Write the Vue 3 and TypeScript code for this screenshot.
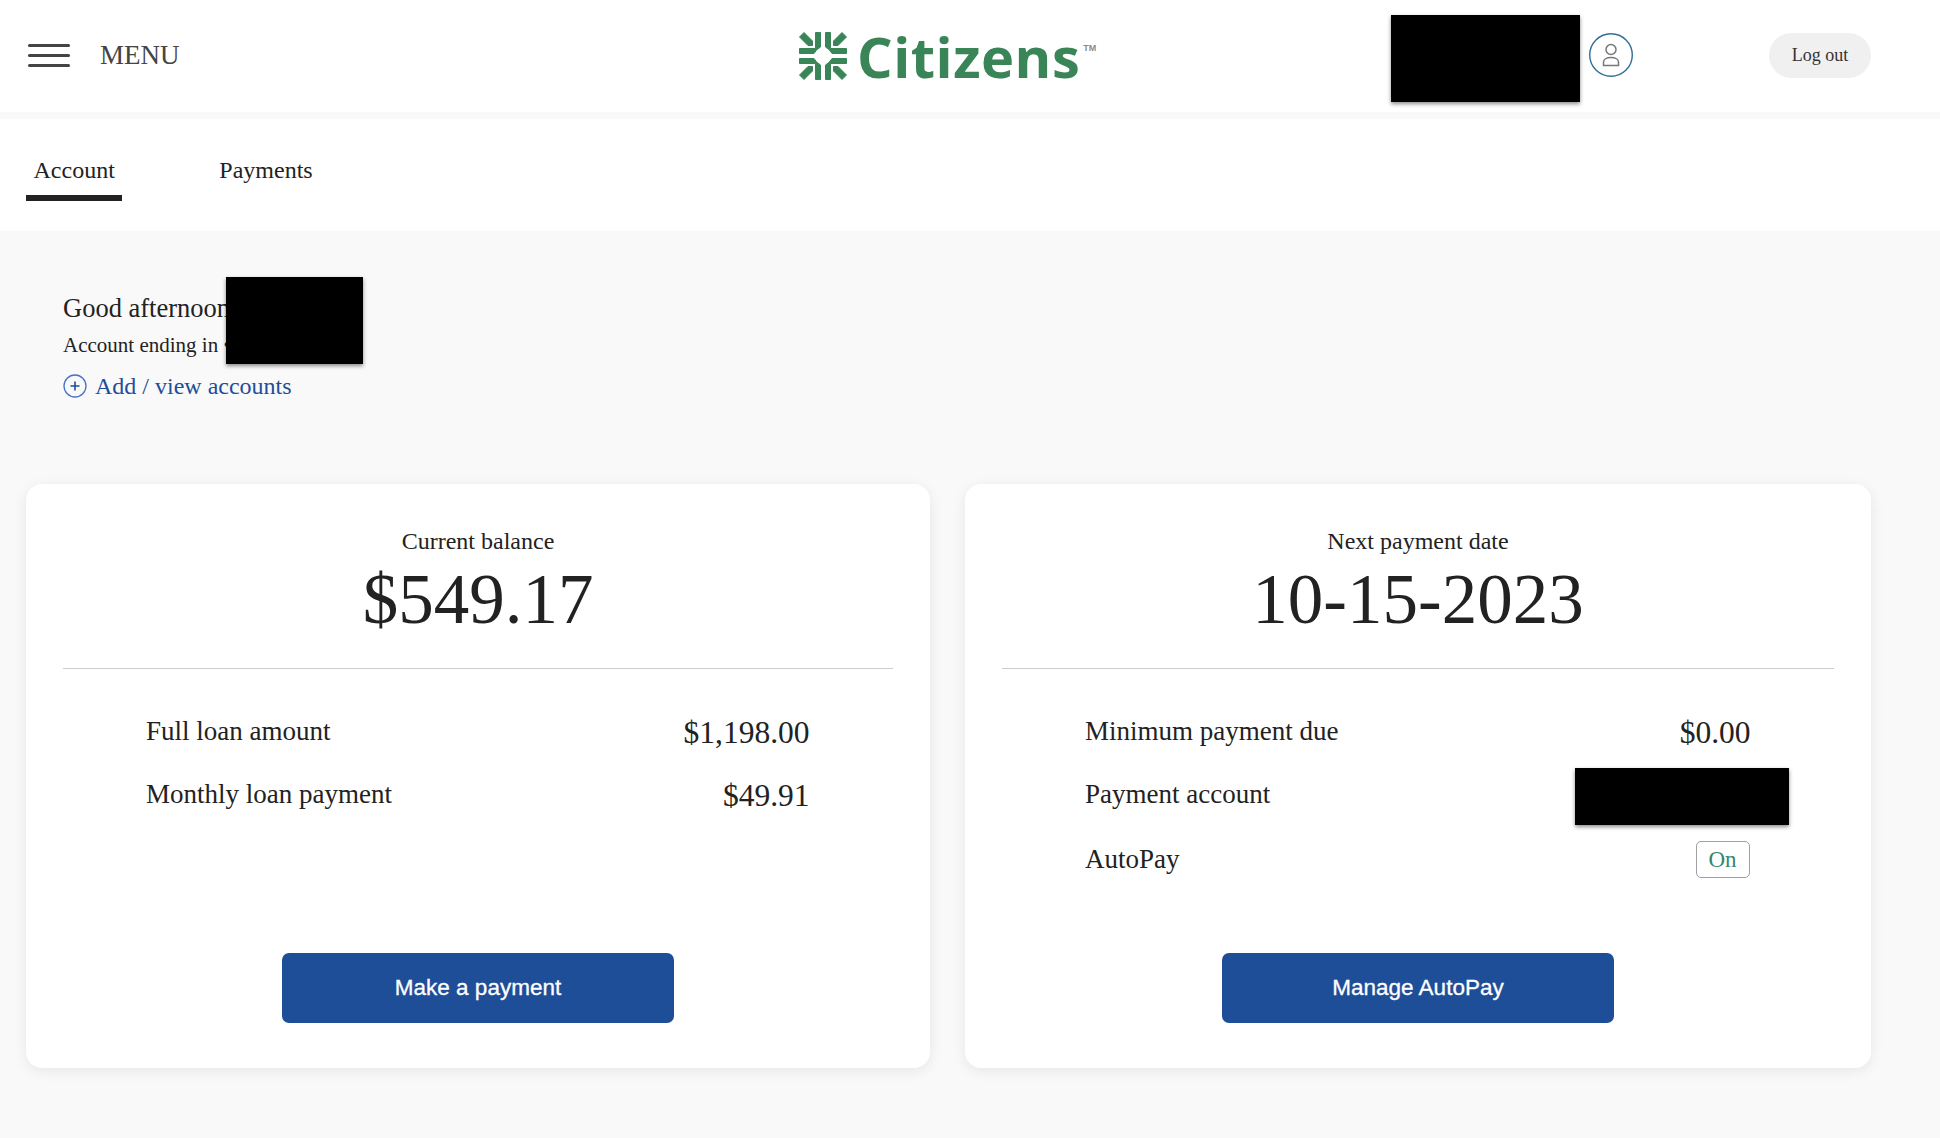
<template>
  <div class="page">
    <header class="topbar">
      <div class="menu">
        <span class="burger"><i></i><i></i><i></i></span>
        <span class="menu-label">MENU</span>
      </div>
      <div class="logo">
        <svg class="logo-mark" viewBox="0 0 48 48" aria-hidden="true">
          <g fill="#3a8558" stroke="#3a8558" stroke-width="1" stroke-linejoin="round">
            <g v-for="a in [0, 90, 180, 270]" :key="a" :transform="`rotate(${a} 24 24)`">
              <path d="M16.500 .5H21.500V15Q17.500 17 15 21.500H.5V16.500H16.500Z" />
              <path d="M.5 5L5 .5L13.500 9V13.500H9Z" />
            </g>
          </g>
        </svg>
        <span class="logo-text">Citizens</span>
        <span class="logo-tm">TM</span>
      </div>
      <div class="user">
        <span class="avatar">
          <svg viewBox="0 0 44 44" width="44" height="44" aria-hidden="true">
            <circle cx="22" cy="22" r="21.300" fill="none" stroke="#2f6f96" stroke-width="1.400" />
            <circle cx="22" cy="16.500" r="5" fill="none" stroke="#777" stroke-width="1.500" />
            <path d="M14.500 32.500v-3.500c0-2.500 3-4.500 7.500-4.500s7.500 2 7.500 4.500v3.500z" fill="none" stroke="#777" stroke-width="1.500" />
          </svg>
        </span>
      </div>
      <button class="logout">Log out</button>
      <div class="redact redact-user"></div>
    </header>

    <nav class="tabs">
      <a class="tab active">Account</a>
      <a class="tab">Payments</a>
    </nav>

    <main class="content">
      <section class="greeting">
        <div class="hello">Good afternoon</div>
        <div class="ending">Account ending in •</div>
        <a class="add">
          <svg viewBox="0 0 24 24" width="24" height="24" aria-hidden="true">
            <circle cx="12" cy="12" r="11" fill="none" stroke="#4a72c4" stroke-width="1.300" />
            <path d="M12 7.500v9M7.500 12h9" stroke="#1f4e99" stroke-width="1.600" />
          </svg>
          Add / view accounts
        </a>
        <div class="redact redact-name"></div>
      </section>

      <section class="cards">
        <article v-for="card in cards" :key="card.title" class="card">
          <div class="card-head">
            <div class="card-title">{{ card.title }}</div>
            <div class="card-value">{{ card.value }}</div>
          </div>
          <div class="rows">
            <div v-for="row in card.rows" :key="row.label" class="row">
              <span class="row-label">{{ row.label }}</span>
              <span v-if="row.badge" class="badge">{{ row.badge }}</span>
              <span v-else-if="row.hidden" class="redact-inline"></span>
              <span v-else class="row-value">{{ row.value }}</span>
            </div>
          </div>
          <button class="action">{{ card.action }}</button>
        </article>
      </section>
    </main>
  </div>
</template>

<script setup lang="ts">
interface Row {
  label: string
  value?: string
  badge?: string
  hidden?: boolean
}

interface Card {
  title: string
  value: string
  rows: Row[]
  action: string
}

const cards: Card[] = [
  {
    title: 'Current balance',
    value: '$549.17',
    rows: [
      { label: 'Full loan amount', value: '$1,198.00' },
      { label: 'Monthly loan payment', value: '$49.91' },
    ],
    action: 'Make a payment',
  },
  {
    title: 'Next payment date',
    value: '10-15-2023',
    rows: [
      { label: 'Minimum payment due', value: '$0.00' },
      { label: 'Payment account', hidden: true },
      { label: 'AutoPay', badge: 'On' },
    ],
    action: 'Manage AutoPay',
  },
]
</script>

<style>
html,
body {
  margin: 0;
  background: #f9f9f9;
}
</style>

<style scoped>
.page {
  width: 1940px;
  height: 1138px;
  overflow: hidden;
  background: #f9f9f9;
  color: #222;
  font-family: 'Liberation Serif', serif;
}

.topbar {
  position: relative;
  height: 112px;
  background: #fff;
  display: flex;
  align-items: center;
}

.menu {
  display: flex;
  align-items: center;
  gap: 30px;
  margin-left: 28px;
  margin-top: -2px;
}

.burger {
  display: flex;
  flex-direction: column;
  gap: 7px;
  width: 42px;
}

.burger i {
  display: block;
  height: 3px;
  background: #444;
  border-radius: 2px;
}

.menu-label {
  font-size: 27px;
  color: #444;
}

.logo {
  position: absolute;
  left: 799px;
  top: 30px;
  display: flex;
  align-items: flex-start;
}

.logo-mark {
  width: 48px;
  height: 48px;
  margin: 2px 2px 0 0;
}

.logo-text {
  margin-left: 8px;
  margin-top: -1px;
  font-family: 'Open Sans', sans-serif;
  font-weight: 700;
  font-size: 56px;
  line-height: 54px;
  letter-spacing: 0.5px;
  color: #3a8558;
}

.logo-tm {
  font-family: 'Liberation Sans', sans-serif;
  font-size: 9px;
  font-weight: 700;
  color: #8a8a8a;
  margin: 13px 0 0 3px;
}

.user {
  position: absolute;
  left: 1589px;
  top: 33px;
}

.avatar {
  display: block;
  width: 44px;
  height: 44px;
}

.logout {
  position: absolute;
  left: 1769px;
  top: 33px;
  width: 102px;
  height: 45px;
  border: 0;
  border-radius: 23px;
  background: #f0f0f0;
  color: #333;
  font-family: inherit;
  font-size: 18px;
}

.redact {
  position: absolute;
  background: #000;
  box-shadow: 0 2px 4px rgba(0, 0, 0, 0.45);
}

.redact-user {
  left: 1391px;
  top: 15px;
  width: 189px;
  height: 87px;
}

.tabs {
  margin-top: 7px;
  height: 112px;
  background: #fff;
  display: flex;
  padding-left: 26px;
  gap: 89.500px;
  box-sizing: border-box;
}

.tab {
  height: 82px;
  padding: 27px 7.500px 0;
  display: flex;
  align-items: center;
  box-sizing: border-box;
  font-size: 24px;
  color: #222;
}

.tab.active {
  border-bottom: 6px solid #222;
}

.tab:not(.active) {
  padding-bottom: 6px;
}

.content {
  padding: 0 69px 0 26px;
}

.greeting {
  position: relative;
  height: 253px;
  padding: 60px 0 0 37px;
  box-sizing: border-box;
}

.hello {
  font-size: 26.500px;
  line-height: 34px;
}

.ending {
  font-size: 21px;
  line-height: 26px;
  margin-top: 7px;
}

.add {
  display: flex;
  align-items: center;
  gap: 8px;
  margin-top: 14px;
  font-size: 24px;
  line-height: 28px;
  color: #1f4e99;
}

.redact-name {
  left: 200px;
  top: 46px;
  width: 137px;
  height: 87px;
}

.cards {
  display: grid;
  grid-template-columns: 904fr 906fr;
  gap: 35px;
}

.card {
  height: 584px;
  box-sizing: border-box;
  padding: 0 37px;
  background: #fff;
  border-radius: 16px;
  box-shadow: 0 3px 14px rgba(0, 0, 0, 0.08);
  display: flex;
  flex-direction: column;
}

.card-head {
  height: 185px;
  padding-top: 42px;
  box-sizing: border-box;
  border-bottom: 1px solid #ccc;
  text-align: center;
}

.card-title {
  font-size: 24px;
  line-height: 30px;
}

.card-value {
  font-size: 71px;
  line-height: 86px;
}

.rows {
  flex: 1;
  padding: 31px 83.500px 0 83px;
}

.row {
  height: 63.200px;
  display: flex;
  align-items: center;
  justify-content: space-between;
}

.row-label {
  font-size: 27px;
}

.row:nth-child(3) {
  padding-top: 2px;
}

.row-value {
  font-size: 31.500px;
  position: relative;
  top: 1px;
}

.redact-inline {
  width: 214px;
  height: 57px;
  margin-top: 3px;
  margin-right: -38px;
  background: #000;
  box-shadow: 0 2px 4px rgba(0, 0, 0, 0.45);
}

.badge {
  width: 54px;
  height: 37px;
  margin-right: 1px;
  box-sizing: border-box;
  border: 1px solid #a0a0a0;
  border-radius: 5px;
  display: flex;
  align-items: center;
  justify-content: center;
  font-size: 23px;
  color: #38866c;
}

.action {
  align-self: center;
  width: 392px;
  height: 70px;
  margin-bottom: 45px;
  border: 0;
  border-radius: 7px;
  background: #1f4e99;
  color: #fff;
  font-family: 'Liberation Sans', sans-serif;
  font-size: 22.500px;
  -webkit-text-stroke: 0.3px #fff;
}
</style>
